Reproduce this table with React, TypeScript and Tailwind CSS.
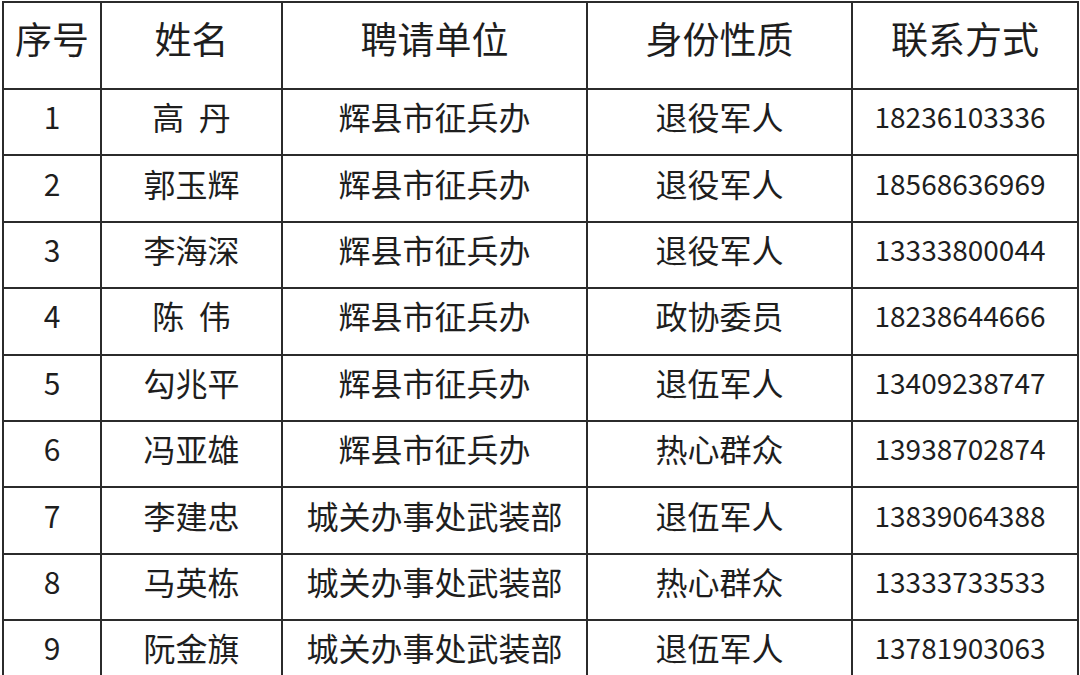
const rows = [
  { no: "1", name: "高  丹", unit: "辉县市征兵办", kind: "退役军人", phone: "18236103336" },
  { no: "2", name: "郭玉辉", unit: "辉县市征兵办", kind: "退役军人", phone: "18568636969" },
  { no: "3", name: "李海深", unit: "辉县市征兵办", kind: "退役军人", phone: "13333800044" },
  { no: "4", name: "陈  伟", unit: "辉县市征兵办", kind: "政协委员", phone: "18238644666" },
  { no: "5", name: "勾兆平", unit: "辉县市征兵办", kind: "退伍军人", phone: "13409238747" },
  { no: "6", name: "冯亚雄", unit: "辉县市征兵办", kind: "热心群众", phone: "13938702874" },
  { no: "7", name: "李建忠", unit: "城关办事处武装部", kind: "退伍军人", phone: "13839064388" },
  { no: "8", name: "马英栋", unit: "城关办事处武装部", kind: "热心群众", phone: "13333733533" },
  { no: "9", name: "阮金旗", unit: "城关办事处武装部", kind: "退伍军人", phone: "13781903063" },
]

const headers = ["序号", "姓名", "聘请单位", "身份性质", "联系方式"]

export default function App() {
  return (
    <div
      className="w-[1080px] h-[675px] overflow-hidden bg-white pl-[2px] pt-[1px] text-[#1e1e1e]"
      style={{ fontFamily: '"Noto Sans CJK SC", "Noto Sans", sans-serif' }}
    >
      <table className="border-collapse table-fixed w-[1075px]">
        <colgroup>
          <col className="w-[98px]" />
          <col className="w-[181px]" />
          <col className="w-[305px]" />
          <col className="w-[265px]" />
          <col className="w-[226px]" />
        </colgroup>
        <thead>
          <tr className="h-[87px]">
            {headers.map((h) => (
              <th key={h} className="border-2 border-[#2b2b2b] text-[37px] font-normal text-center pb-[14px] leading-none">
                {h}
              </th>
            ))}
          </tr>
        </thead>
        <tbody>
          {rows.map((r) => (
            <tr key={r.no} className="h-[66.4px]">
              <td className="border-2 border-[#2b2b2b] text-[30px] text-center pb-[12px] leading-none">{r.no}</td>
              <td className="border-2 border-[#2b2b2b] text-[32px] text-center pb-[12px] leading-none whitespace-pre">{r.name}</td>
              <td className="border-2 border-[#2b2b2b] text-[32px] text-center pb-[12px] leading-none">{r.unit}</td>
              <td className="border-2 border-[#2b2b2b] text-[32px] text-center pb-[12px] leading-none">{r.kind}</td>
              <td className="border-2 border-[#2b2b2b] text-[28px] text-center pb-[12px] pr-[10px] leading-none">{r.phone}</td>
            </tr>
          ))}
        </tbody>
      </table>
    </div>
  )
}
